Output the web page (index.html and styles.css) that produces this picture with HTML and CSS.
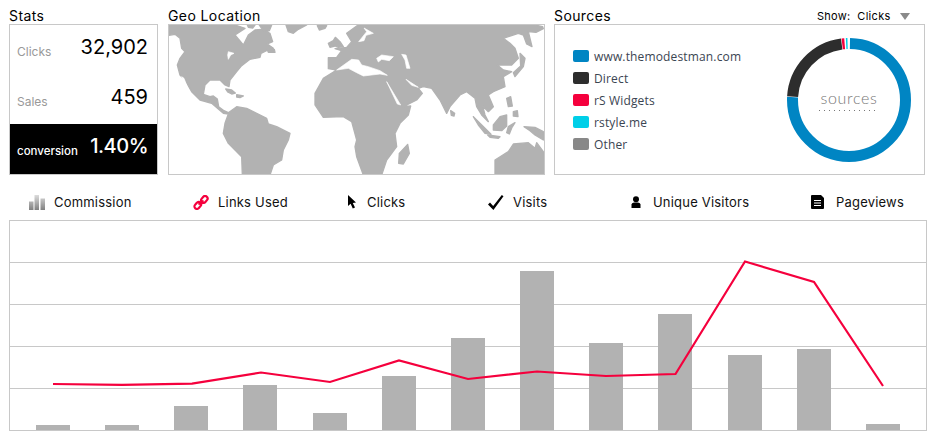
FILE: index.html
```html
<!DOCTYPE html>
<html>
  <head>
    <meta charset="utf-8">
    <title>Stats</title>
    <link rel="stylesheet" href="styles.css">
  </head>
  <body>
    <div class="top">
      <section>
        <h2 class="title">Stats</h2>
        <div class="box stats">
          <div class="stat"><span class="stat-label">Clicks</span><span class="stat-value">32,902</span></div>
          <div class="stat"><span class="stat-label">Sales</span><span class="stat-value">459</span></div>
          <div class="stat stat-dark"><span class="stat-label">conversion</span><span class="stat-value">1.40%</span></div>
        </div>
      </section>

      <section>
        <h2 class="title">Geo Location</h2>
        <div class="box map">
          <svg class="map-svg" viewBox="27 75 1125 450" width="375" height="150">
            <g class="land">
              <path d="M27 75L225 75L255 85L225 105L250 135L265 105L285 90L305 88L330 100L338 125L322 132L340 145L330 147L303 160L300 172L270 178L245 197L230 215L210 240L207 260L195 255L180 240L150 240L135 255L130 283L150 290L160 288L172 297L176 320L192 332L205 338L230 320L260 325L290 340L320 355L325 372L350 380L390 400L385 420L370 450L365 480L340 495L330 525L247 525L245 470L225 450L205 430L190 400L195 370L205 342L190 340L175 327L155 310L120 300L95 275L75 240L60 225L52 195L60 175L75 155L65 145L60 115L45 103L27 106Z"/>
              <path d="M378 75L440 75L415 88L400 100L385 95Z"/>
              <path d="M472 77L500 77L495 85L478 90Z"/>
              <path d="M262 75L285 75L278 84L265 82Z"/>
              <path d="M298 75L335 75L328 92L315 96L305 85Z"/>
              <path d="M322 150L343 148L345 157L325 157Z"/>
              <path d="M197 267L215 270L226 279L215 282L203 276Z"/>
              <path d="M230 284L250 288L240 293L230 291Z"/>
              <path d="M505 130L520 122L526 112L540 125L550 140L535 142L525 138L510 142Z"/>
              <path d="M560 100L590 78L600 75L1125 75L1148 80L1150 86L1128 97L1105 95L1116 140L1100 132L1090 105L1075 100L1030 115L1050 130L1065 145L1075 175L1055 195L1012 195L1030 210L1055 215L1030 230L1035 260L1000 275L985 285L1000 320L985 335L968 318L975 345L985 365L965 345L950 320L945 295L920 275L900 285L870 320L860 340L840 300L815 265L790 260L775 265L787 280L770 300L730 320L752 318L745 345L720 370L705 400L710 440L680 480L665 525L610 525L590 470L585 440L590 420L575 365L550 350L490 352L465 315L465 280L490 235L530 210L505 206L505 173L530 172L545 152L525 146L560 142L575 125Z"/>
              <path d="M1080 160L1095 175L1090 200L1065 230L1060 218L1082 198Z"/>
              <path d="M1040 295L1052 290L1057 318L1045 320Z"/>
              <path d="M1060 335L1072 332L1074 350L1060 348Z"/>
              <path d="M1000 375L1020 350L1040 345L1040 378L1025 392L1000 390Z"/>
              <path d="M1045 380L1065 368L1056 382L1048 402L1040 398Z"/>
              <path d="M940 350L975 385L993 403L975 400L955 375Z"/>
              <path d="M983 405L1020 410L1015 415L990 412Z"/>
              <path d="M1092 380L1125 382L1150 395L1150 420L1125 405L1110 392Z"/>
              <path d="M1005 480L1045 455L1060 432L1105 428L1125 445L1130 428L1150 455L1150 525L1005 525Z"/>
              <path d="M743 433L748 460L730 492L716 490L718 460Z"/>
              <path d="M872 332L884 340L882 348L874 346Z"/>
            </g>
            <g class="sea">
              <path d="M530 210L575 178L596 180L605 195L625 200L660 212L682 226L660 222L610 228L590 218L565 205Z"/>
              <path d="M650 175L665 165L700 170L688 182L665 178L655 186Z"/>
              <path d="M725 163L738 165L750 205L740 205L735 180Z"/>
              <path d="M680 245L722 315L712 312Z"/>
              <path d="M738 238L775 262L755 256Z"/>
              <path d="M596 125L620 95L612 84L640 100L618 106L612 122Z"/>
              <path d="M65 230L72 235L85 270L76 260Z"/>
              <path d="M205 155L222 160L212 165L205 178L203 165Z"/>
            </g>
          </svg>
        </div>
      </section>

      <section>
        <div class="title-row">
          <h2 class="title">Sources</h2>
          <div class="show">Show:&nbsp; Clicks <span class="show-arrow"></span></div>
        </div>
        <div class="box sources">
          <ul class="legend">
            <li><span class="swatch swatch-blue"></span>www.themodestman.com</li>
            <li><span class="swatch swatch-dark"></span>Direct</li>
            <li><span class="swatch swatch-red"></span>rS Widgets</li>
            <li><span class="swatch swatch-cyan"></span>rstyle.me</li>
            <li><span class="swatch swatch-gray"></span>Other</li>
          </ul>
          <div class="donut">
            <svg viewBox="0 0 126 126" width="126" height="126">
              <g class="donut-ring">
                <circle class="seg-blue" cx="63" cy="63" r="56.5" pathLength="360" stroke-dasharray="272 88" stroke-dashoffset="-1"/>
                <circle class="seg-dark" cx="63" cy="63" r="56.5" pathLength="360" stroke-dasharray="79 281" stroke-dashoffset="-273.5"/>
                <circle class="seg-red" cx="63" cy="63" r="56.5" pathLength="360" stroke-dasharray="2.5 357.5" stroke-dashoffset="-353"/>
                <circle class="seg-cyan" cx="63" cy="63" r="56.5" pathLength="360" stroke-dasharray="1.5 358.5" stroke-dashoffset="-357"/>
              </g>
            </svg>
            <div class="donut-label">sources</div>
          </div>
        </div>
      </section>
    </div>

    <div class="tabs">
      <div class="tab">
        <svg class="tab-icon" width="16" height="15" viewBox="0 0 16 15">
          <defs>
            <linearGradient id="barfade" gradientUnits="userSpaceOnUse" x1="0" y1="0" x2="0" y2="15">
              <stop offset="0" stop-color="#dcdcdc"/>
              <stop offset="1" stop-color="#808080"/>
            </linearGradient>
          </defs>
          <path fill="url(#barfade)" d="M0 6.5h4.5V15H0zM5.5 0H10v15H5.5zM11.5 3.5H16V15h-4.5z"/>
        </svg>
        Commission
      </div>
      <div class="tab">
        <svg class="tab-icon" width="16" height="15" viewBox="0 0 16 15">
          <g class="link-icon">
            <rect x="1" y="8" width="7.5" height="5" rx="2.5" transform="rotate(-50 4.75 10.5)"/>
            <rect x="7.5" y="2" width="7.5" height="5" rx="2.5" transform="rotate(-50 11.25 4.5)"/>
            <path d="M5.5 9.5L10.5 5.5"/>
          </g>
        </svg>
        Links Used
      </div>
      <div class="tab">
        <svg class="tab-icon" width="11" height="14" viewBox="0 0 11 14">
          <path d="M1 0L1 11L3.6 8.7L5.8 13.6L8 12.6L5.8 8L9 7.6Z"/>
        </svg>
        Clicks
      </div>
      <div class="tab">
        <svg class="tab-icon" width="16" height="15" viewBox="0 0 16 15">
          <path d="M0 9.5L2 7.5L5.2 11L13.8 0L15.5 1.2L5.4 15Z"/>
        </svg>
        Visits
      </div>
      <div class="tab">
        <svg class="tab-icon tab-icon-wide" width="10" height="12" viewBox="0 0 10 12">
          <circle cx="5" cy="3.2" r="3"/>
          <path d="M0.5 12V8.5Q0.5 7 3 6.4L7 6.4Q9.5 7 9.5 8.5V12Z"/>
        </svg>
        Unique Visitors
      </div>
      <div class="tab">
        <svg class="tab-icon tab-icon-wide" width="13" height="14" viewBox="0 0 13 14">
          <path d="M1 0H10L13 3V13Q13 14 12 14H1Q0 14 0 13V1Q0 0 1 0Z"/>
          <path class="doc-lines" d="M3 5.5H10M3 8H10M3 10.5H10"/>
        </svg>
        Pageviews
      </div>
    </div>

    <div class="chart">
      <svg viewBox="9 220 918 211" width="918" height="211">
        <g class="grid">
          <path d="M9 262.5H927M9 304.5H927M9 346.5H927M9 388.5H927"/>
        </g>
        <g class="bars">
          <rect x="36" y="425" width="34" height="5"/>
          <rect x="105" y="425" width="34" height="5"/>
          <rect x="174" y="406" width="34" height="24"/>
          <rect x="243" y="385" width="34" height="45"/>
          <rect x="313" y="413" width="34" height="17"/>
          <rect x="382" y="376" width="34" height="54"/>
          <rect x="451" y="338" width="34" height="92"/>
          <rect x="520" y="271" width="34" height="159"/>
          <rect x="589" y="343" width="34" height="87"/>
          <rect x="658" y="314" width="34" height="116"/>
          <rect x="728" y="355" width="34" height="75"/>
          <rect x="797" y="349" width="34" height="81"/>
          <rect x="866" y="424" width="34" height="6"/>
        </g>
        <polyline class="line" points="53,384 122,384.8 192,383.6 261,372.5 330,382 399,360.5 468,379 537,371.5 606,376 675.5,374 745,261.5 814,282 883,386"/>
      </svg>
    </div>
  </body>
</html>
```

FILE: styles.css
```css
body {
  margin: 0;
  padding: 0 0 0 9px;
  background: #fff;
  color: #000;
  font-family: Inter, "Liberation Sans", sans-serif;
}

.top {
  display: grid;
  grid-template-columns: 149px 377px 370px;
  column-gap: 10px;
}
.top section + section + section {
  margin-left: -1px;
}

.title {
  margin: 0;
  height: 24px;
  padding-top: 8px;
  box-sizing: border-box;
  font-size: 14px;
  font-weight: 400;
  line-height: 16px;
  letter-spacing: 0.4px;
}
.title-row {
  display: flex;
  justify-content: space-between;
  align-items: flex-end;
}
.show {
  display: flex;
  align-items: center;
  height: 24px;
  padding: 8px 15px 0 0;
  box-sizing: border-box;
  font-size: 11px;
  letter-spacing: 0.3px;
  white-space: pre;
}
.show-arrow {
  margin-left: 6px;
  border-left: 5px solid transparent;
  border-right: 5px solid transparent;
  border-top: 7px solid #8a8a8a;
}

.box {
  height: 151px;
  box-sizing: border-box;
  border: 1px solid #c8c8c8;
}

/* stats */
.stats {
  display: flex;
  flex-direction: column;
}
.stat {
  flex: 1;
  display: flex;
  justify-content: space-between;
  align-items: center;
  padding: 0 9px 6px 7px;
}
.stat-label {
  padding-top: 10px;
  font-size: 12px;
  color: #999;
}
.stat-value {
  font-size: 20px;
}
.stat-dark {
  background: #000;
  color: #fff;
}
.stat-dark .stat-label {
  font-size: 11.5px;
  font-weight: 500;
  color: #fff;
}
.stat-dark .stat-value {
  font-weight: 500;
  letter-spacing: -0.5px;
}

/* map */
.map {
  overflow: hidden;
}
.map-svg {
  display: block;
}
.land {
  fill: #b2b2b2;
  stroke: #b2b2b2;
  stroke-width: 4;
  stroke-linejoin: round;
}
.sea {
  fill: #fff;
  stroke: #fff;
  stroke-width: 2;
  stroke-linejoin: round;
}

/* sources */
.sources {
  display: flex;
  justify-content: space-between;
  padding: 12px 12px 0 18px;
}
.legend {
  margin: 8px 0 0;
  padding: 0;
  list-style: none;
  font-family: "Open Sans", sans-serif;
  font-size: 12px;
  letter-spacing: 0.15px;
  color: #3b4552;
}
.legend li {
  display: flex;
  align-items: center;
  height: 22px;
}
.swatch {
  width: 16px;
  height: 12px;
  margin-right: 5px;
  border-radius: 2px;
}
.swatch-blue { background: #0085c3; }
.swatch-dark { background: #2d2d2d; }
.swatch-red { background: #f5003d; }
.swatch-cyan { background: #00cfe8; }
.swatch-gray { background: #888; }

.donut {
  position: relative;
  width: 126px;
  height: 126px;
}
.donut svg {
  display: block;
}
.donut-ring {
  fill: none;
  stroke-width: 11;
  transform: rotate(-90deg);
  transform-origin: 63px 63px;
}
.seg-blue { stroke: #0085c3; }
.seg-dark { stroke: #2d2d2d; }
.seg-red { stroke: #f5003d; }
.seg-cyan { stroke: #00cfe8; }
.donut-label {
  position: absolute;
  left: 33px;
  top: 52px;
  width: 60px;
  padding-bottom: 4px;
  background: repeating-linear-gradient(to right, #777 0 1px, transparent 1px 5px) left bottom / 100% 1px no-repeat;
  font-family: Lato, sans-serif;
  font-size: 16px;
  font-weight: 300;
  line-height: 18px;
  letter-spacing: 0.7px;
  text-align: center;
  color: #777;
}

/* tabs */
.tabs {
  display: grid;
  grid-template-columns: 164px 154px 141px 143px 180px auto;
  height: 45px;
  padding: 9px 0 0 20px;
  box-sizing: border-box;
  align-items: center;
  font-size: 13px;
  letter-spacing: 0.2px;
  color: #111;
}
.tab {
  display: flex;
  align-items: center;
}
.tab-icon {
  margin-right: 9px;
}
.tab-icon-wide {
  margin-right: 12px;
}
.link-icon rect {
  fill: none;
  stroke: #f5003d;
  stroke-width: 2.2;
}
.link-icon path {
  fill: none;
  stroke: #f5003d;
  stroke-width: 2;
}
.doc-lines {
  fill: none;
  stroke: #fff;
  stroke-width: 1.2;
}

/* chart */
.chart {
  width: 918px;
  height: 211px;
  outline: 1px solid #c8c8c8;
  outline-offset: -1px;
}
.chart svg {
  display: block;
}
.grid path {
  fill: none;
  stroke: #c8c8c8;
  stroke-width: 1;
}
.bars rect {
  fill: #b2b2b2;
}
.line {
  fill: none;
  stroke: #f5003d;
  stroke-width: 2.2;
}
```
